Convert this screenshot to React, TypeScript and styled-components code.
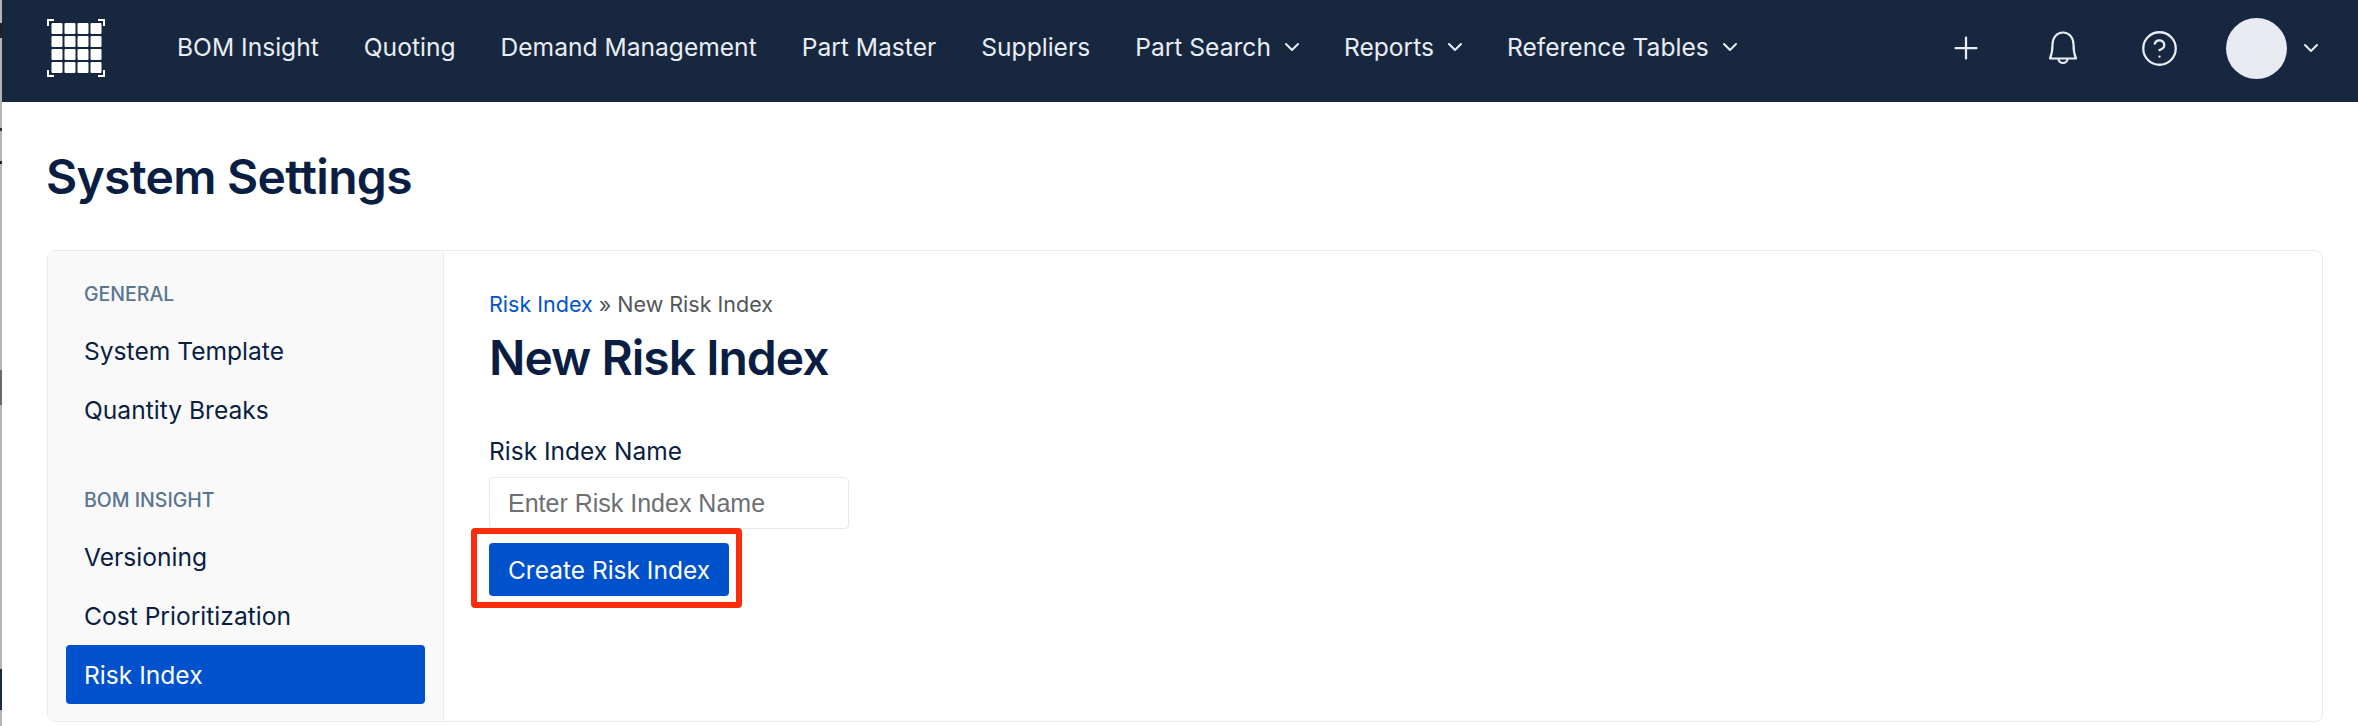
import styled, { createGlobalStyle } from "styled-components";
import { ChevronDown, Plus, CircleHelp } from "lucide-react";

const GlobalStyle = createGlobalStyle`
	html, body {
		margin: 0;
		padding: 0;
		background: #fff;
		font-family: Inter, "Liberation Sans", sans-serif;
		color: #091e42;
	}
`;

const Page = styled.div`
	width: 2358px;
	height: 726px;
	display: flex;
	overflow: hidden;
`;

// sliver of whatever window sat behind the screenshot
const WindowEdge = styled.div`
	flex: 0 0 2px;
	background: linear-gradient(
		to bottom,
		#b4b4b4 0 23px,
		#222 23px 38px,
		#b4b4b4 38px 128px,
		#333 128px 131px,
		#b4b4b4 131px 161px,
		#222 161px 164px,
		#b4b4b4 164px 370px,
		#6a6a6a 370px 405px,
		#b4b4b4 405px 669px,
		#1c2a40 669px 710px,
		#b4b4b4 710px
	);
`;

const Screen = styled.div`
	flex: 1;
	min-width: 0;
`;

const TopBar = styled.header`
	height: 102px;
	box-sizing: border-box;
	background: #182740;
	color: #e9edf4;
	display: flex;
	align-items: center;
	padding: 0 35px 6px 45px;
`;

const NavList = styled.nav`
	display: flex;
	align-items: center;
	margin: 0 0 2px 72px;
	gap: 45px;
	flex: 1;
`;

const NavItem = styled.a`
	display: flex;
	align-items: center;
	gap: 9px;
	font-size: 24.6px;
	white-space: nowrap;

	svg {
		margin-right: -5px;
	}
`;

const Actions = styled.div`
	display: flex;
	align-items: center;
`;

const IconSlot = styled.span`
	width: 97px;
	display: flex;
	justify-content: center;
`;

const Avatar = styled.span`
	width: 61px;
	height: 61px;
	border-radius: 50%;
	background: #e8ebf1;
	margin: 0 12px 0 18px;
`;

const Body = styled.main`
	padding: 0 35px 0 45px;
`;

const PageTitle = styled.h1`
	margin: 0 0 0 -1px;
	padding-top: 44px;
	height: 104px;
	font-size: 48px;
	line-height: 62px;
	font-weight: 600;
	letter-spacing: -0.7px;
`;

const Card = styled.section`
	height: 472px;
	box-sizing: border-box;
	display: flex;
	border: 1px solid #e9ebee;
	border-radius: 8px;
	overflow: hidden;
`;

const Sidebar = styled.aside`
	width: 396px;
	box-sizing: border-box;
	background: #f9f9fa;
	border-right: 1px solid #e9ebee;
	padding: 29px 18px 0 18px;
	display: flex;
	flex-direction: column;
`;

const SectionLabel = styled.div<{ $spaced?: boolean }>`
	font-size: 19.5px;
	font-weight: 500;
	line-height: 28px;
	text-transform: uppercase;
	color: #5a7590;
	padding-left: 18px;
	margin-top: ${(p) => (p.$spaced ? "47px" : "0")};
	margin-bottom: 13px;
`;

const SideItem = styled.a<{ $active?: boolean }>`
	height: 59px;
	display: flex;
	align-items: center;
	padding-left: 18px;
	font-size: 24.6px;
	border-radius: 4px;
	background: ${(p) => (p.$active ? "#0052cc" : "transparent")};
	color: ${(p) => (p.$active ? "#fff" : "#091e42")};
`;

const Content = styled.div`
	flex: 1;
	padding: 38px 45px;
`;

const Crumbs = styled.div`
	font-size: 21.5px;
	line-height: 30px;
	color: #52565b;
`;

const CrumbLink = styled.a`
	color: #0052cc;
`;

const Heading = styled.h2`
	margin: 8px 0 0;
	font-size: 48px;
	line-height: 62px;
	font-weight: 600;
	letter-spacing: -1px;
`;

const Field = styled.div`
	margin-top: 46px;
	display: flex;
	flex-direction: column;
	align-items: flex-start;
`;

const FieldLabel = styled.label`
	font-size: 24.5px;
	line-height: 32px;
	margin-bottom: 10px;
`;

const TextInput = styled.input`
	width: 360px;
	height: 52px;
	box-sizing: border-box;
	border: 1px solid #e6e8eb;
	border-radius: 4px;
	padding: 0 18px;
	font: 25px "Liberation Sans", Arial, sans-serif;
	outline: none;

	&::placeholder {
		color: #6c6f73;
		opacity: 1;
	}
`;

// red annotation box drawn around the button in the screenshot
const Highlight = styled.div`
	margin: -1px 0 0 -18px;
	padding: 9px 7px 6px 12px;
	border: 6px solid #fb2e0c;
	border-radius: 4px;
`;

const PrimaryButton = styled.button`
	display: block;
	width: 240px;
	height: 53px;
	border: 0;
	border-radius: 4px;
	background: #0052cc;
	color: #fff;
	font: 24.5px Inter, "Liberation Sans", sans-serif;
	padding: 0;
`;

const Logo = () => (
	<svg width="58" height="58" viewBox="0 0 58 58" fill="none">
		{[0, 1, 2, 3].flatMap((r) =>
			[0, 1, 2, 3].map((c) => (
				<rect key={`${r}-${c}`} x={4.5 + c * 13} y={4 + r * 13} width="11" height="11" rx="1" fill="#fff" />
			)),
		)}
		<path d="M1 7V1H7M57 7V1H51M1 51V57H7M57 51V57H51" stroke="#fff" strokeWidth="2" />
	</svg>
);

const BellIcon = () => (
	<svg width="30" height="34" viewBox="0 0 30 34" fill="none" stroke="currentColor" strokeWidth="2.2" strokeLinejoin="round">
		<path d="M2 27.5H28C26.5 24 25.5 20 25.5 13.5C25.5 6.5 21 1.5 15 1.5C9 1.5 4.5 6.5 4.5 13.5C4.5 20 3.5 24 2 27.5Z" />
		<path d="M10.5 27.5A4.5 4.5 0 0 0 19.5 27.5" />
	</svg>
);

const navItems = [
	{ label: "BOM Insight" },
	{ label: "Quoting" },
	{ label: "Demand Management" },
	{ label: "Part Master" },
	{ label: "Suppliers" },
	{ label: "Part Search", menu: true },
	{ label: "Reports", menu: true },
	{ label: "Reference Tables", menu: true },
];

export default function App() {
	return (
		<Page>
			<GlobalStyle />
			<WindowEdge />
			<Screen>
				<TopBar>
					<Logo />
					<NavList>
						{navItems.map((item) => (
							<NavItem key={item.label}>
								{item.label}
								{item.menu && <ChevronDown size={24} strokeWidth={2} />}
							</NavItem>
						))}
					</NavList>
					<Actions>
						<IconSlot>
							<Plus size={36} strokeWidth={1.5} />
						</IconSlot>
						<IconSlot>
							<BellIcon />
						</IconSlot>
						<IconSlot>
							<CircleHelp size={39} strokeWidth={1.4} />
						</IconSlot>
						<Avatar />
						<ChevronDown size={24} strokeWidth={2} />
					</Actions>
				</TopBar>
				<Body>
					<PageTitle>System Settings</PageTitle>
					<Card>
						<Sidebar>
							<SectionLabel>General</SectionLabel>
							<SideItem>System Template</SideItem>
							<SideItem>Quantity Breaks</SideItem>
							<SectionLabel $spaced>BOM Insight</SectionLabel>
							<SideItem>Versioning</SideItem>
							<SideItem>Cost Prioritization</SideItem>
							<SideItem $active>Risk Index</SideItem>
						</Sidebar>
						<Content>
							<Crumbs>
								<CrumbLink>Risk Index</CrumbLink> » New Risk Index
							</Crumbs>
							<Heading>New Risk Index</Heading>
							<Field>
								<FieldLabel>Risk Index Name</FieldLabel>
								<TextInput placeholder="Enter Risk Index Name" />
								<Highlight>
									<PrimaryButton>Create Risk Index</PrimaryButton>
								</Highlight>
							</Field>
						</Content>
					</Card>
				</Body>
			</Screen>
		</Page>
	);
}
